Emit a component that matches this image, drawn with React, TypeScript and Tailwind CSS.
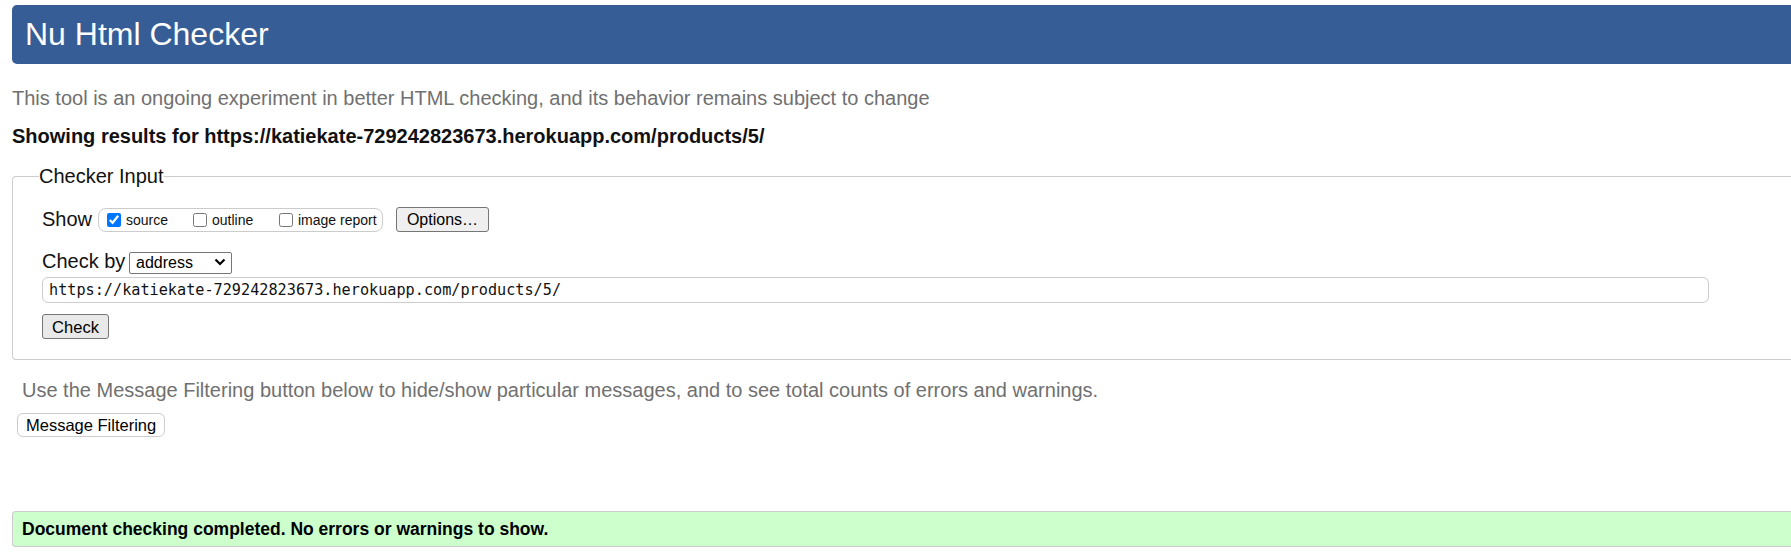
import React from "react";

function Chevron() {
  return (
    <svg width="12" height="8" viewBox="0 0 12 8" className="pointer-events-none absolute right-[6px] top-[7px]">
      <path d="M1.5 1.5 L6 6 L10.5 1.5" fill="none" stroke="#000" strokeWidth="2.2" />
    </svg>
  );
}

export default function App() {
  return (
    <div className="min-h-[558px] w-full overflow-hidden bg-white pl-[12px] pt-[5px] font-['Liberation_Sans',Arial,sans-serif] text-black">
      <header className="flex h-[59px] items-center rounded-l-[5px] bg-[#365d95] pl-[13px]">
        <h1 className="text-[32px] leading-[37px] text-white">Nu Html Checker</h1>
      </header>

      <p className="mt-[23px] text-[20px] leading-[23px] text-[#707070]">
        This tool is an ongoing experiment in better HTML checking, and its behavior remains subject to change
      </p>

      <p className="mt-[15px] text-[20px] font-bold leading-[23px] text-[#111]">
        Showing results for https://katiekate-729242823673.herokuapp.com/products/5/
      </p>

      <fieldset className="mt-[17px] rounded-l-[4px] border border-r-0 border-[#cccccc] pb-[20px] pl-[29px] pt-[19px]">
        <legend className="ml-[-3px] text-[20px] leading-[23px] text-[#111]">Checker Input</legend>

        <div className="flex h-[25px] items-center">
          <span className="w-[56px] text-[20px] leading-[23px] text-[#111]">Show</span>
          <div className="flex h-[24px] w-[285px] items-center rounded-[8px] border border-[#cccccc] pl-[8px] text-[14px] text-[#111]">
            <label className="flex w-[86px] items-center">
              <input type="checkbox" defaultChecked className="m-0 h-[14px] w-[14px]" />
              <span className="ml-[5px] leading-[16px]">source</span>
            </label>
            <label className="flex w-[86px] items-center">
              <input type="checkbox" className="m-0 h-[14px] w-[14px]" />
              <span className="ml-[5px] leading-[16px]">outline</span>
            </label>
            <label className="flex items-center">
              <input type="checkbox" className="m-0 h-[14px] w-[14px]" />
              <span className="ml-[5px] leading-[16px]">image report</span>
            </label>
          </div>
          <button className="ml-[13px] h-[25px] w-[93px] rounded-[3px] border border-[#767676] bg-[#efefef] text-[16px] leading-[18px] text-black">
            Options…
          </button>
        </div>

        <div className="mt-[18px] flex h-[23px] items-center">
          <span className="w-[87px] text-[20px] leading-[23px] text-[#111]">Check by</span>
          <div className="relative h-[22px] w-[103px]">
            <select className="h-[22px] w-[103px] appearance-none rounded-[2px] border border-[#767676] bg-white pl-[6px] text-[16px] leading-[18px] text-black">
              <option>address</option>
            </select>
            <Chevron />
          </div>
        </div>

        <input
          type="text"
          readOnly
          value="https://katiekate-729242823673.herokuapp.com/products/5/"
          className="mt-[4px] block h-[26px] w-[1667px] rounded-[6px] border border-[#cccccc] bg-white pl-[6px] font-['DejaVu_Sans_Mono',monospace] text-[15.2px] text-[#111] outline-none"
        />

        <button className="mt-[11px] block h-[25px] w-[67px] rounded-[3px] border border-[#767676] bg-[#e9e9e9] text-[16.5px] leading-[18px] text-black">
          Check
        </button>
      </fieldset>

      <p className="ml-[10px] mt-[19px] text-[20px] leading-[23px] text-[#707070]">
        Use the Message Filtering button below to hide/show particular messages, and to see total counts of errors and warnings.
      </p>

      <button className="ml-[5px] mt-[11px] block h-[24px] rounded-[6px] border border-[#cccccc] bg-white px-[8px] text-[16.5px] leading-[18px] text-black">
        Message Filtering
      </button>

      <div className="mt-[74px] flex h-[36px] items-center rounded-l-[4px] border border-r-0 border-[#cccccc] bg-[#ccffcc] pl-[9px]">
        <p className="text-[17.5px] font-bold leading-[20px] text-black">
          Document checking completed. No errors or warnings to show.
        </p>
      </div>
    </div>
  );
}
